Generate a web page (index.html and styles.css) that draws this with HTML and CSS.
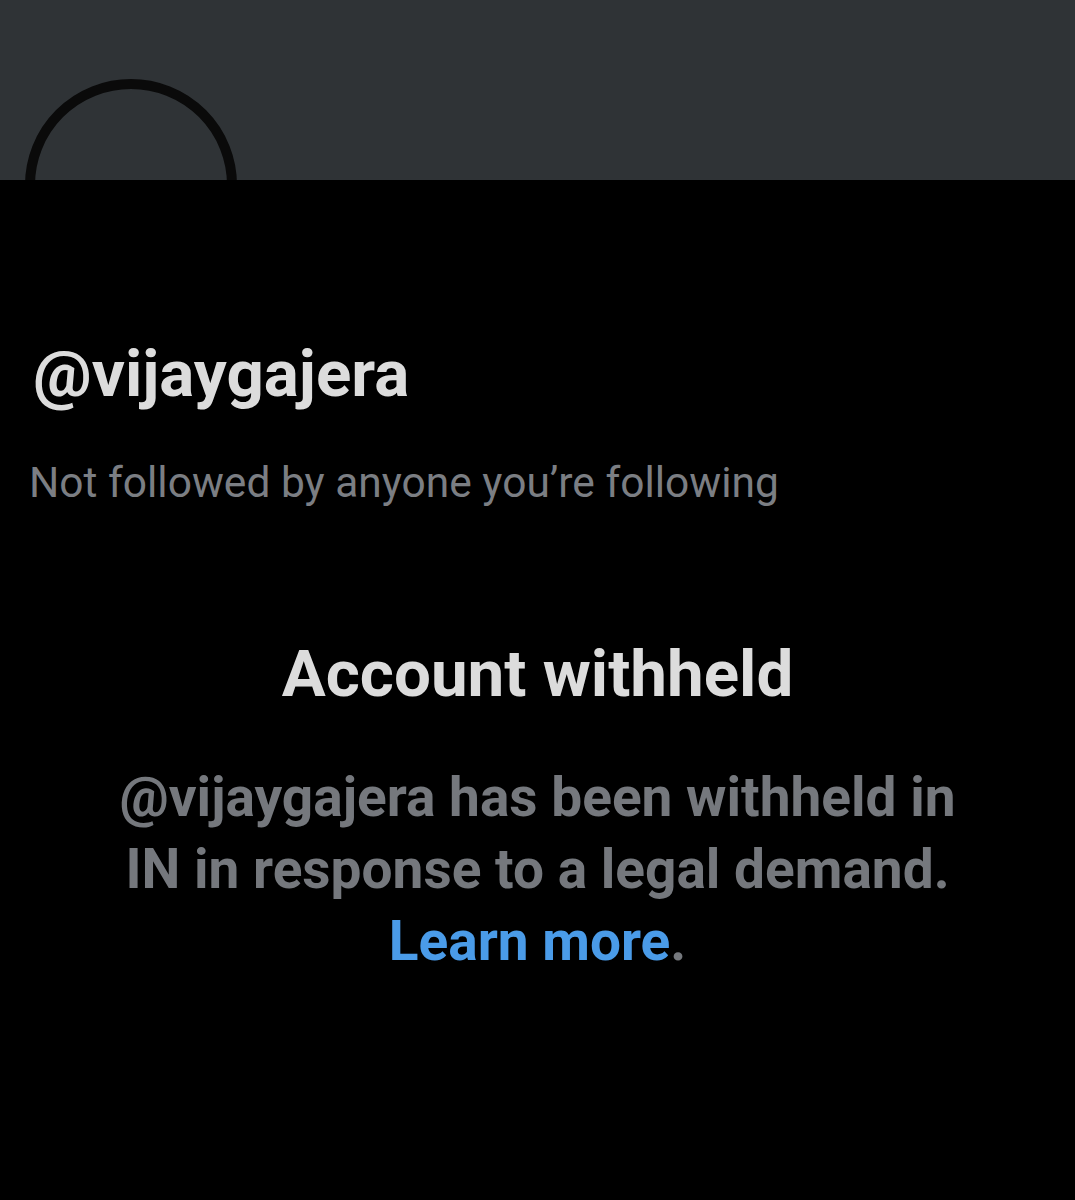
FILE: index.html
```html
<!DOCTYPE html>
<html>
<head>
<meta charset="utf-8">
<link rel="stylesheet" href="styles.css">
</head>
<body>
<div class="page">
  <header class="banner">
    <div class="avatar"></div>
  </header>
  <section class="profile">
    <h1 class="handle">@vijaygajera</h1>
    <p class="followers">Not followed by anyone you’re following</p>
  </section>
  <section class="notice">
    <h2 class="notice-title">Account withheld</h2>
    <p class="notice-body">@vijaygajera has been withheld in IN in response to a legal demand. <a class="link" href="#">Learn more</a>.</p>
  </section>
</div>
</body>
</html>
```

FILE: styles.css
```css
html, body {
  margin: 0;
  padding: 0;
  background: #000;
}
body {
  font-family: Roboto, "Liberation Sans", sans-serif;
  width: 1075px;
  height: 1200px;
  overflow: hidden;
}
.page {
  position: relative;
}
.banner {
  position: relative;
  height: 180px;
  background: #2f3336;
}
.avatar {
  position: absolute;
  left: 25px;
  top: 79px;
  width: 212px;
  height: 212px;
  box-sizing: border-box;
  border-radius: 50%;
  border: 10px solid #0a0a0a;
  background: transparent;
}
.profile {
  position: relative;
  z-index: 1;
  background: #000;
  padding: 154px 0 0 33px;
}
.handle {
  margin: 0;
  font-size: 65.5px;
  font-weight: 700;
  line-height: 80px;
  color: #dcdcdc;
}
.followers {
  margin: 44px 0 0 -4px;
  font-size: 42.5px;
  font-weight: 400;
  line-height: 50px;
  color: #7b7e83;
}
.notice {
  text-align: center;
  padding: 0 107px;
}
.notice-title {
  margin: 126px 0 0;
  font-size: 65.5px;
  font-weight: 700;
  line-height: 80px;
  color: #dcdcdc;
}
.notice-body {
  margin: 47px 0 0;
  font-size: 55px;
  font-weight: 700;
  line-height: 72px;
  color: #75787d;
}
.link {
  color: #4a9be8;
  text-decoration: none;
}
```
